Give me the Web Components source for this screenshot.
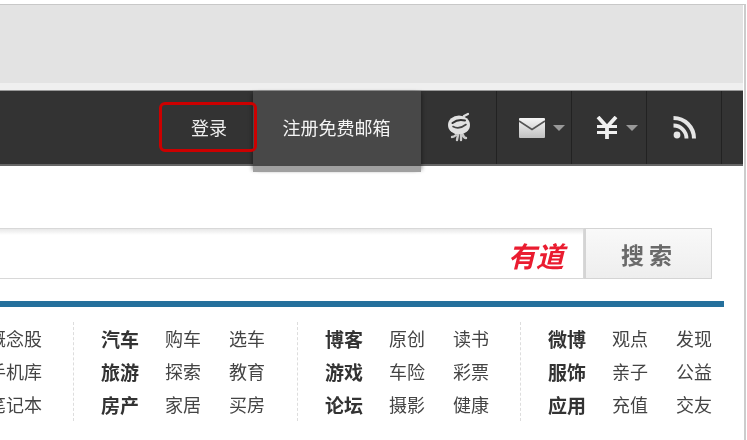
<!DOCTYPE html>
<html lang="zh">
<head>
<meta charset="utf-8">
<title>163</title>
<style>
    html, body {
        margin: 0;
        height: 100%;
        overflow: hidden;
        background: #fff;
    }
    body {
        font-family: "Noto Sans CJK SC", "Liberation Sans", sans-serif;
    }
</style>
</head>
<body>
<portal-page>
    <top-banner></top-banner>
    <nav-bar>
        <nav-login slot="account">登录</nav-login>
        <nav-tab slot="account">注册免费邮箱</nav-tab>
        <nav-icon wide>
            <svg width="26" height="32" viewBox="0 0 26 32">
                <ellipse cx="13" cy="13" rx="11" ry="9.500" fill="#e2e2e2"/>
                <g fill="none" stroke-linecap="round">
                    <path d="M6.500 11 Q12 6.500 19 8.500" stroke="#333" stroke-width="2"/>
                    <path d="M7 14.500 Q13 18 20 12.500" stroke="#444" stroke-width="1.600"/>
                    <path d="M18 4 L22 2" stroke="#ddd" stroke-width="2.200"/>
                    <path d="M10 23 Q8 25 6 25 M12 23 L11 28 M15 23 L15 28 M17 23 Q18 26 20 26" stroke="#ccc" stroke-width="2.400"/>
                </g>
            </svg>
        </nav-icon>
        <nav-icon caret>
            <svg width="26" height="20" viewBox="0 0 26 20">
                <defs>
                    <linearGradient id="mail" x1="0" y1="0" x2="0" y2="1">
                        <stop offset="0" stop-color="#f6f6f6"/>
                        <stop offset="1" stop-color="#c0c0c0"/>
                    </linearGradient>
                </defs>
                <path d="M1 0 H25 A1 1 0 0 1 26 1 V19 A1 1 0 0 1 25 20 H1 A1 1 0 0 1 0 19 V1 A1 1 0 0 1 1 0 Z" fill="url(#mail)"/>
                <path d="M0 3 L13 11.500 L26 3" fill="none" stroke="#555" stroke-width="1.600"/>
            </svg>
        </nav-icon>
        <nav-icon caret>
            <svg width="22" height="23" viewBox="0 0 22 23">
                <g fill="none" stroke="#f0f0f0" stroke-width="3.800">
                    <path d="M2 1 L11 11 L20 1"/>
                    <path d="M11 10 V23"/>
                </g>
                <path d="M1 10.500 H21 M1 16.500 H21" stroke="#f0f0f0" stroke-width="2.800"/>
            </svg>
        </nav-icon>
        <nav-icon>
            <svg width="23" height="23" viewBox="0 0 23 23">
                <circle cx="4" cy="19" r="3.400" fill="#e6e6e6"/>
                <path d="M0.500 9.500 A13 13 0 0 1 13.500 22.500" fill="none" stroke="#e6e6e6" stroke-width="3.800"/>
                <path d="M0.500 2 A20.500 20.500 0 0 1 21 22.500" fill="none" stroke="#e6e6e6" stroke-width="4"/>
            </svg>
        </nav-icon>
        <nav-icon></nav-icon>
    </nav-bar>
    <search-box>
        <span slot="brand">有道</span>
        搜索
    </search-box>
    <link-board>
        <link-group partial>
            <a>概念股</a>
            <a>手机库</a>
            <a>笔记本</a>
        </link-group>
        <link-group>
            <b>汽车</b><a>购车</a><a>选车</a>
            <b>旅游</b><a>探索</a><a>教育</a>
            <b>房产</b><a>家居</a><a>买房</a>
        </link-group>
        <link-group>
            <b>博客</b><a>原创</a><a>读书</a>
            <b>游戏</b><a>车险</a><a>彩票</a>
            <b>论坛</b><a>摄影</a><a>健康</a>
        </link-group>
        <link-group>
            <b>微博</b><a>观点</a><a>发现</a>
            <b>服饰</b><a>亲子</a><a>公益</a>
            <b>应用</b><a>充值</a><a>交友</a>
        </link-group>
    </link-board>
</portal-page>

<script>
    class PortalPage extends HTMLElement {
        constructor() {
            super();
            this.attachShadow({ mode: "open" }).innerHTML = `
                <style>
                    :host {
                        display: block;
                        width: 746px;
                        height: 436px;
                        margin-top: 4px;
                        overflow: hidden;
                        box-sizing: border-box;
                        padding-right: 1px;
                        border-top: 1px solid #c8c8c8;
                        border-right: 2px solid #ccc;
                        filter: blur(0.4px);
                    }
                </style>
                <slot></slot>
            `;
        }
    }

    class TopBanner extends HTMLElement {
        constructor() {
            super();
            this.attachShadow({ mode: "open" }).innerHTML = `
                <style>
                    :host {
                        display: block;
                        height: 78px;
                        background: #e3e3e3;
                        border-bottom: 7px solid #efefef;
                    }
                </style>
            `;
        }
    }

    class NavBar extends HTMLElement {
        constructor() {
            super();
            this.attachShadow({ mode: "open" }).innerHTML = `
                <style>
                    :host {
                        display: flex;
                        height: 73px;
                        padding-left: 159px;
                        background: #333;
                        border-top: 1px solid #999;
                        border-bottom: 2px solid #666;
                    }
                </style>
                <slot name="account"></slot>
                <slot></slot>
            `;
        }
    }

    class NavLogin extends HTMLElement {
        constructor() {
            super();
            this.attachShadow({ mode: "open" }).innerHTML = `
                <style>
                    :host {
                        display: flex;
                        flex: none;
                        position: relative;
                        width: 94px;
                        align-items: center;
                        box-sizing: border-box;
                        padding-left: 32px;
                        font-size: 18px;
                        color: #eee;
                    }
                    span {
                        margin-top: -1px;
                    }
                    .focus {
                        position: absolute;
                        z-index: 2;
                        left: 0;
                        top: 11px;
                        width: 98px;
                        height: 50px;
                        box-sizing: border-box;
                        border: 3px solid #c00;
                        border-radius: 6px;
                    }
                </style>
                <span><slot></slot></span>
                <div class="focus"></div>
            `;
        }
    }

    class NavTab extends HTMLElement {
        constructor() {
            super();
            this.attachShadow({ mode: "open" }).innerHTML = `
                <style>
                    :host {
                        display: flex;
                        flex: none;
                        width: 168px;
                        height: 75px;
                        align-items: center;
                        justify-content: center;
                        border-bottom: 6px solid #a0a0a0;
                        background: #484848;
                        box-shadow: -3px 0 4px -2px rgba(0, 0, 0, .4), 3px 0 4px -2px rgba(0, 0, 0, .4);
                        font-size: 18px;
                        color: #f4f4f4;
                        z-index: 1;
                    }
                    span {
                        margin: -3px 1px 0 0;
                    }
                </style>
                <span><slot></slot></span>
            `;
        }
    }

    class NavIcon extends HTMLElement {
        constructor() {
            super();
            this.attachShadow({ mode: "open" }).innerHTML = `
                <style>
                    :host {
                        display: flex;
                        flex: none;
                        width: 73px;
                        padding-left: 1px;
                        align-items: center;
                        justify-content: center;
                        gap: 8px;
                        border-right: 1px solid #222;
                    }
                    :host([wide]) {
                        width: 74px;
                    }
                    :host([caret]) {
                        width: 59px;
                        padding-left: 15px;
                    }
                    :host(:last-child) {
                        border-right: 0;
                        width: 20px;
                    }
                    .caret {
                        display: none;
                        width: 0;
                        height: 0;
                        border: 6px solid transparent;
                        border-top-color: #999;
                        border-bottom-width: 0;
                    }
                    :host([caret]) .caret {
                        display: block;
                    }
                    ::slotted(svg) {
                        display: block;
                    }
                </style>
                <slot></slot>
                <div class="caret"></div>
            `;
        }
    }

    class SearchBox extends HTMLElement {
        constructor() {
            super();
            this.attachShadow({ mode: "open" }).innerHTML = `
                <style>
                    :host {
                        display: flex;
                        width: 712px;
                        height: 51px;
                        margin-top: 62px;
                        box-sizing: border-box;
                    }
                    .field {
                        flex: 1;
                        display: flex;
                        align-items: center;
                        justify-content: flex-end;
                        padding-right: 19px;
                        background: linear-gradient(#e8e8e8, #fff 6px);
                        border: 1px solid #d8d8d8;
                        border-left: 0;
                    }
                    ::slotted([slot="brand"]) {
                        display: block;
                        margin-top: 2px;
                        font-size: 28px;
                        font-weight: 700;
                        font-style: italic;
                        line-height: 1;
                        color: #ea1c30;
                    }
                    button {
                        width: 128px;
                        padding: 0 0 0 1px;
                        font: 700 23px "Noto Sans CJK SC", sans-serif;
                        letter-spacing: 5px;
                        color: #6a6a6a;
                        background: linear-gradient(#f9f9f9, #eee);
                        border: 1px solid #d4d4d4;
                        border-left-width: 2px;
                    }
                </style>
                <div class="field"><slot name="brand"></slot></div>
                <button><slot></slot></button>
            `;
        }
    }

    class LinkBoard extends HTMLElement {
        constructor() {
            super();
            this.attachShadow({ mode: "open" }).innerHTML = `
                <style>
                    :host {
                        display: flex;
                        width: 724px;
                        margin-top: 22px;
                        padding-top: 15px;
                        border-top: 6px solid #25709c;
                    }
                </style>
                <slot></slot>
            `;
        }
    }

    class LinkGroup extends HTMLElement {
        constructor() {
            super();
            this.attachShadow({ mode: "open" }).innerHTML = `
                <style>
                    :host {
                        display: grid;
                        flex: none;
                        width: 224px;
                        height: 99px;
                        box-sizing: border-box;
                        grid-template-columns: repeat(3, 64px);
                        grid-auto-rows: 33px;
                        padding-left: 27px;
                        border-left: 1px dashed #ddd;
                        align-items: center;
                        font-size: 18px;
                        line-height: 33px;
                        color: #444;
                    }
                    :host(:nth-child(3)) {
                        width: 223px;
                    }
                    :host([partial]) {
                        display: flex;
                        flex-direction: column;
                        align-items: flex-end;
                        width: 73px;
                        padding: 0 31px 0 0;
                        border-left: 0;
                    }
                    ::slotted(a) {
                        white-space: nowrap;
                    }
                    ::slotted(b) {
                        font-size: 19px;
                        font-weight: 700;
                        color: #333;
                        white-space: nowrap;
                    }
                </style>
                <slot></slot>
            `;
        }
    }

    customElements.define("portal-page", PortalPage);
    customElements.define("top-banner", TopBanner);
    customElements.define("nav-bar", NavBar);
    customElements.define("nav-login", NavLogin);
    customElements.define("nav-tab", NavTab);
    customElements.define("nav-icon", NavIcon);
    customElements.define("search-box", SearchBox);
    customElements.define("link-board", LinkBoard);
    customElements.define("link-group", LinkGroup);
</script>
</body>
</html>
